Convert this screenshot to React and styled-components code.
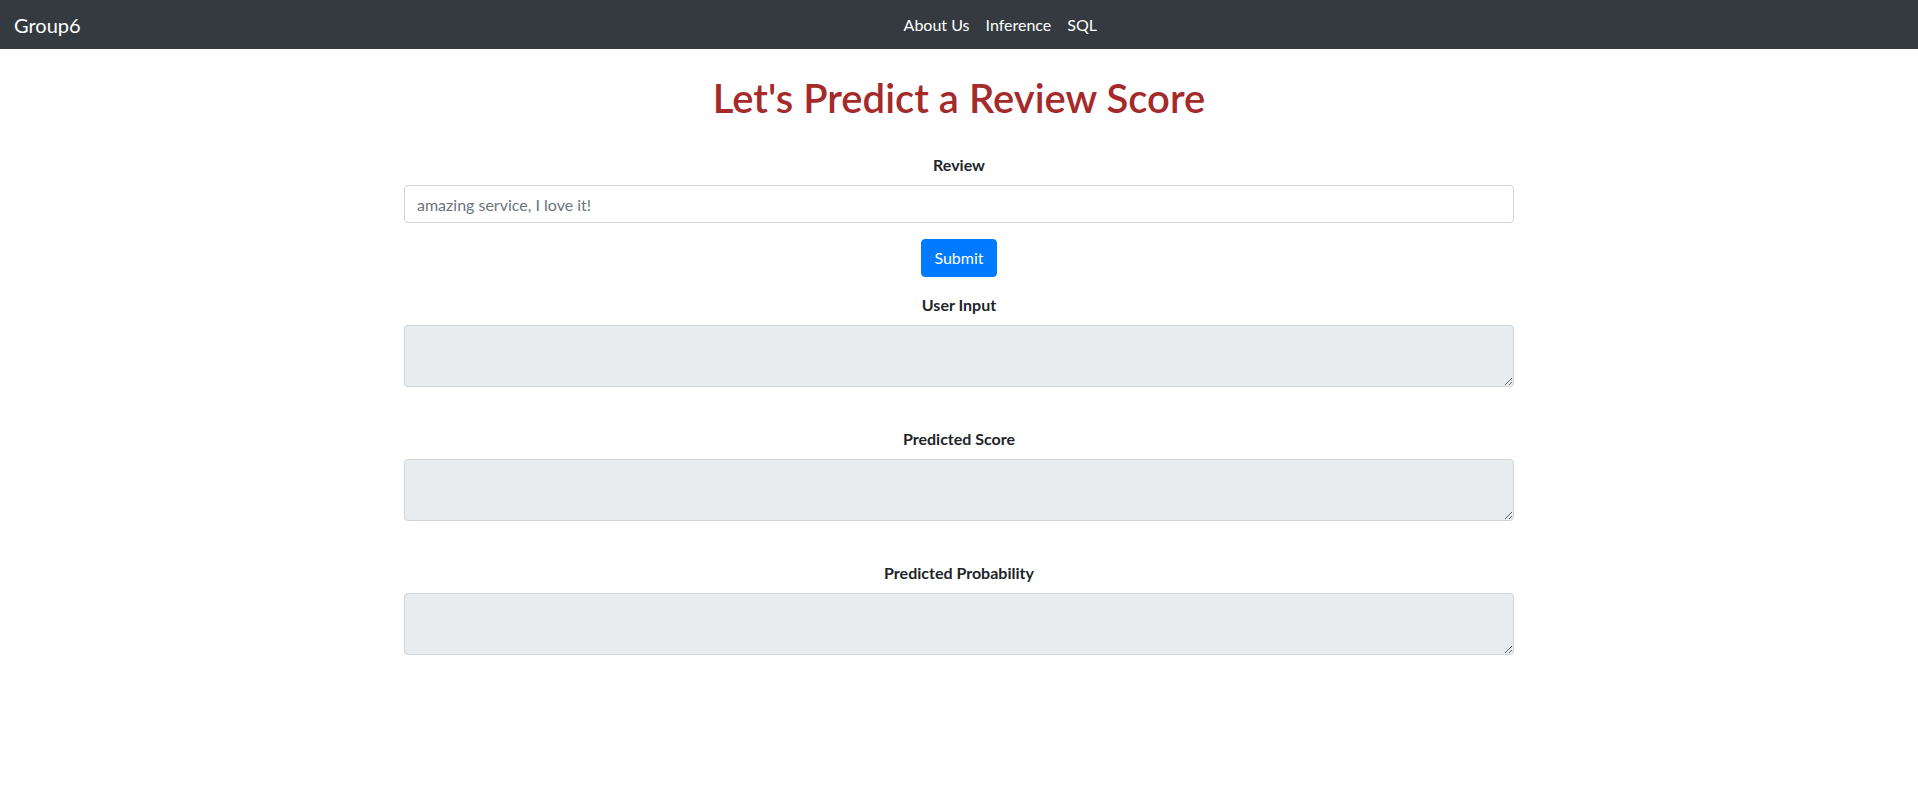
import React from 'react';
import styled, { createGlobalStyle } from 'styled-components';

const GlobalStyle = createGlobalStyle`
  * { box-sizing: border-box; }
  body {
    margin: 0;
    background: #fff;
    color: #212529;
    font-family: Lato, "Noto Sans", sans-serif;
    font-size: 16px;
    line-height: 1.5;
  }
`;

const Navbar = styled.nav`
  height: 49px;
  background-color: #343a40;
  display: flex;
  align-items: center;
  padding: 0 14px;
`;

const Brand = styled.a`
  color: #fff;
  font-size: 20px;
  line-height: 1;
  margin-right: 16px;
  text-decoration: none;
`;

const NavLinks = styled.ul`
  list-style: none;
  display: flex;
  margin: 0 auto;
  padding: 0;
`;

const NavLink = styled.a`
  display: block;
  color: #fff;
  text-decoration: none;
  padding: 0 8px;
  font-size: 16px;
`;

const Container = styled.main`
  max-width: 1140px;
  margin: 0 auto;
  padding: 0 15px;
  text-align: center;
`;

const Title = styled.h1`
  color: brown;
  font-size: 40px;
  font-weight: 600;
  line-height: 1.2;
  margin: 25px 0 31px;
`;

const Label = styled.label`
  display: block;
  font-weight: 700;
  margin-bottom: 8px;
`;

const TextInput = styled.input`
  display: block;
  width: 100%;
  height: 38px;
  padding: 6px 12px;
  font: inherit;
  color: #495057;
  background: #fff;
  border: 1px solid #ced4da;
  border-radius: 4px;

  &::placeholder {
    color: #6c757d;
  }
`;

const SubmitButton = styled.button`
  margin: 16px 0;
  height: 38px;
  padding: 6px 12px;
  font: inherit;
  color: #fff;
  background-color: #007bff;
  border: 1px solid #007bff;
  border-radius: 4px;
`;

const Group = styled.div`
  margin-bottom: 40px;
`;

const Output = styled.textarea`
  display: block;
  width: 100%;
  height: 62px;
  padding: 6px 12px;
  font: inherit;
  color: #495057;
  background-color: #e9ecef;
  border: 1px solid #ced4da;
  border-radius: 4px;
`;

const outputs = ['User Input', 'Predicted Score', 'Predicted Probability'];

export default function App() {
  return (
    <>
      <GlobalStyle />
      <Navbar>
        <Brand href="#">Group6</Brand>
        <NavLinks>
          <li><NavLink href="#">About Us</NavLink></li>
          <li><NavLink href="#">Inference</NavLink></li>
          <li><NavLink href="#">SQL</NavLink></li>
        </NavLinks>
      </Navbar>
      <Container>
        <Title>Let's Predict a Review Score</Title>
        <Label>Review</Label>
        <TextInput placeholder="amazing service, I love it!" />
        <SubmitButton>Submit</SubmitButton>
        {outputs.map(name => (
          <Group key={name}>
            <Label>{name}</Label>
            <Output readOnly />
          </Group>
        ))}
      </Container>
    </>
  );
}
